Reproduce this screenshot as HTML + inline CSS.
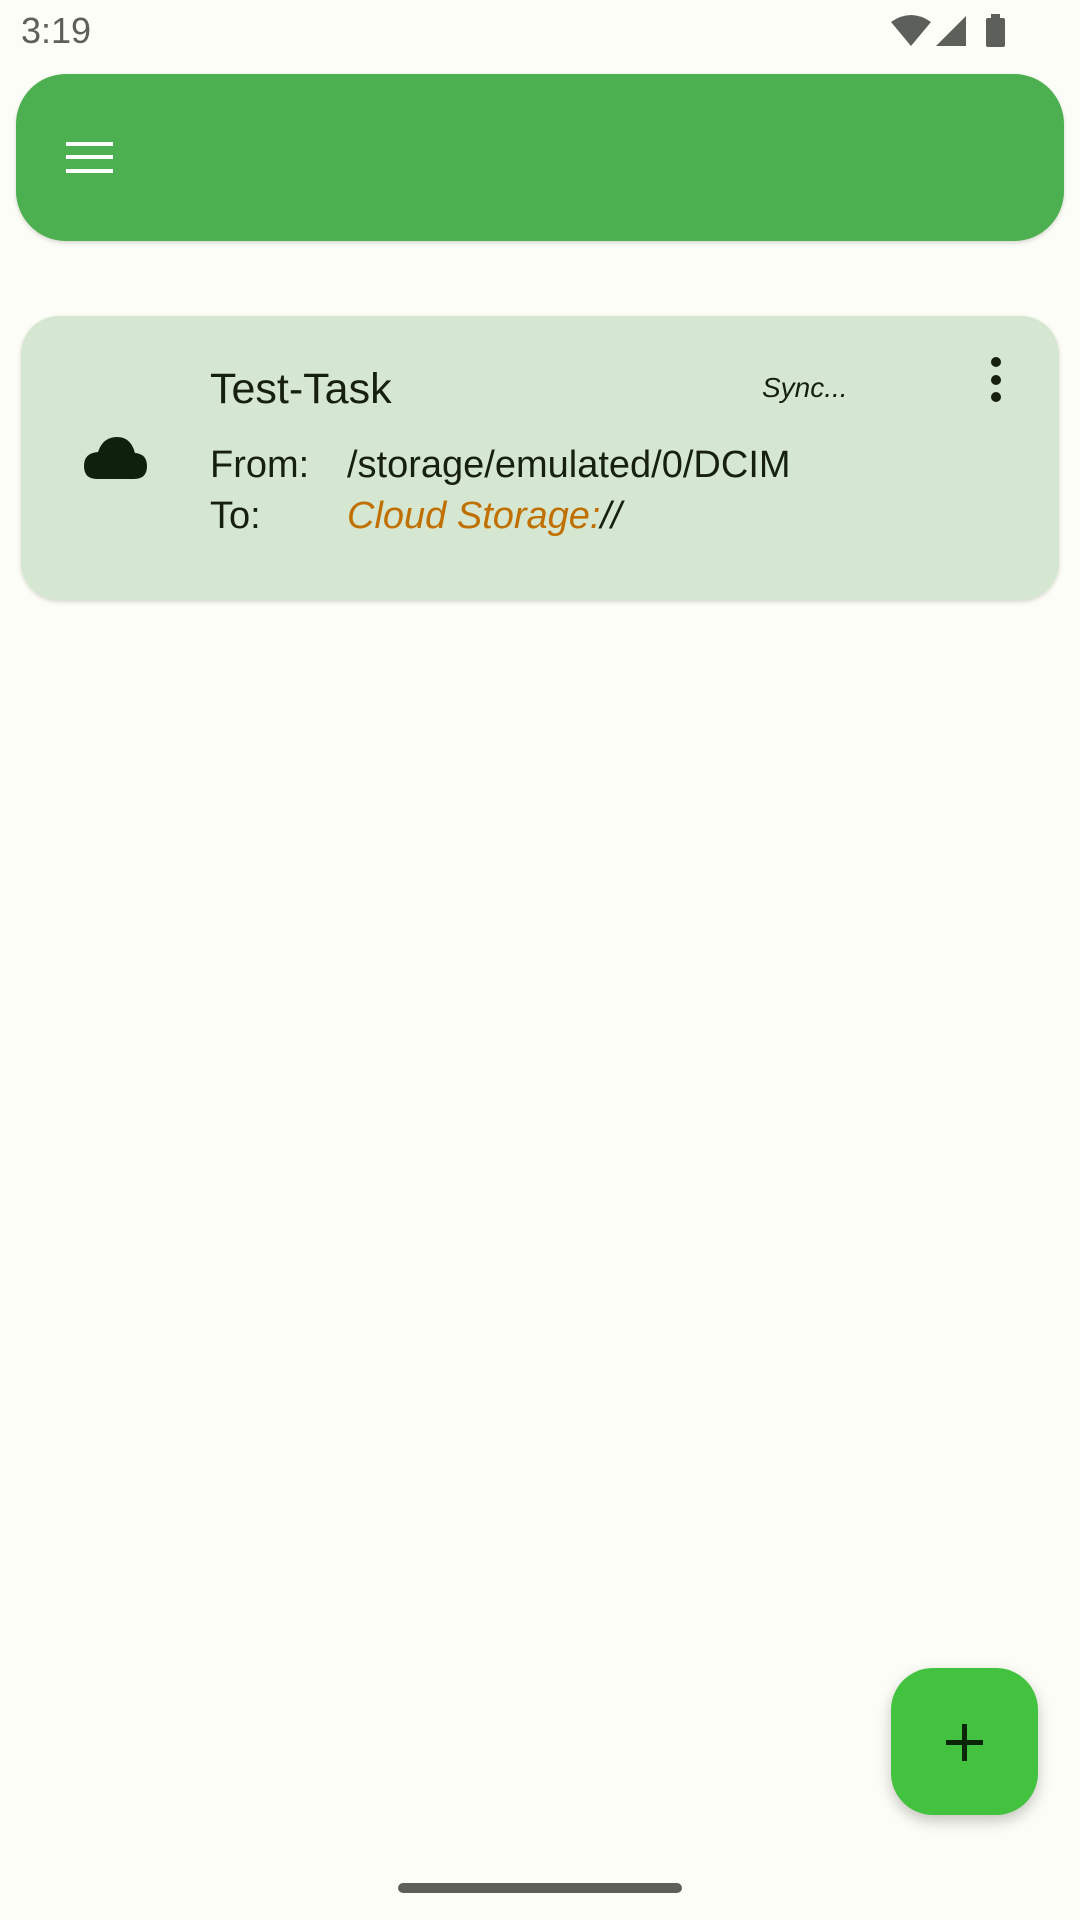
<!DOCTYPE html>
<html><head><meta charset="utf-8"><style>
html,body{margin:0;padding:0}
body{width:1080px;height:1920px;background:#fcfdf6;position:relative;overflow:hidden;font-family:"Liberation Sans",sans-serif}
.abs{position:absolute}
.t{position:absolute;white-space:nowrap;color:#17200f}
</style></head><body>
<div class="t" style="left:21px;top:10px;font-size:36px;color:#5d5f5a">3:19</div>
<svg class="abs" style="left:888px;top:12px" width="130" height="40" viewBox="0 0 130 40">
<path d="M3 10 Q23 -4 43 10 L23 34 Z" fill="#5d5f5a"/>
<path d="M78 4 L78 34 L48 34 Z" fill="#5d5f5a"/>
<rect x="98" y="6" width="19" height="29" rx="2" fill="#5d5f5a"/>
<rect x="103" y="2" width="9" height="5" fill="#5d5f5a"/>
</svg>
<div class="abs" style="left:16px;top:74px;width:1048px;height:167px;border-radius:50px;background:#4caf50;box-shadow:0 2px 4px rgba(0,0,0,.15)"></div>
<div class="abs" style="left:66px;top:142px;width:47px;height:4px;background:#fff"></div>
<div class="abs" style="left:66px;top:155px;width:47px;height:4px;background:#fff"></div>
<div class="abs" style="left:66px;top:169px;width:47px;height:4px;background:#fff"></div>
<div class="abs" style="left:21px;top:316px;width:1038px;height:284px;border-radius:38px;background:#d5e7d0;box-shadow:0 2px 4px rgba(0,0,0,.15)"></div>
<svg class="abs" style="left:83px;top:436px" width="66" height="45" viewBox="0 0 66 45">
<path d="M14 43 Q1 43 1 30 Q1 17 15 16 Q20 1 34 1 Q48 1 52 17 Q64 18 64 30 Q64 43 51 43 Z" fill="#0f200d"/>
</svg>
<div class="t" style="left:210px;top:365px;font-size:43px">Test-Task</div>
<div class="t" style="left:762px;top:372px;font-size:28px;font-style:italic">Sync...</div>
<div class="abs" style="left:991px;top:357px;width:10px;height:10px;border-radius:50%;background:#17200f"></div>
<div class="abs" style="left:991px;top:375px;width:10px;height:10px;border-radius:50%;background:#17200f"></div>
<div class="abs" style="left:991px;top:392px;width:10px;height:10px;border-radius:50%;background:#17200f"></div>
<div class="t" style="left:210px;top:444px;font-size:38px">From:</div>
<div class="t" style="left:347px;top:444px;font-size:38px">/storage/emulated/0/DCIM</div>
<div class="t" style="left:210px;top:495px;font-size:38px">To:</div>
<div class="t" style="left:347px;top:495px;font-size:38px;font-style:italic"><span style="color:#c07000">Cloud Storage:</span>//</div>
<div class="abs" style="left:891px;top:1668px;width:147px;height:147px;border-radius:42px;background:#43c23f;box-shadow:0 6px 14px rgba(0,0,0,.22)"></div>
<div class="abs" style="left:946px;top:1740px;width:37px;height:5px;background:#0a2508"></div>
<div class="abs" style="left:962px;top:1724px;width:5px;height:37px;background:#0a2508"></div>
<div class="abs" style="left:398px;top:1883px;width:284px;height:10px;border-radius:5px;background:#5d5f5a"></div>
</body></html>
